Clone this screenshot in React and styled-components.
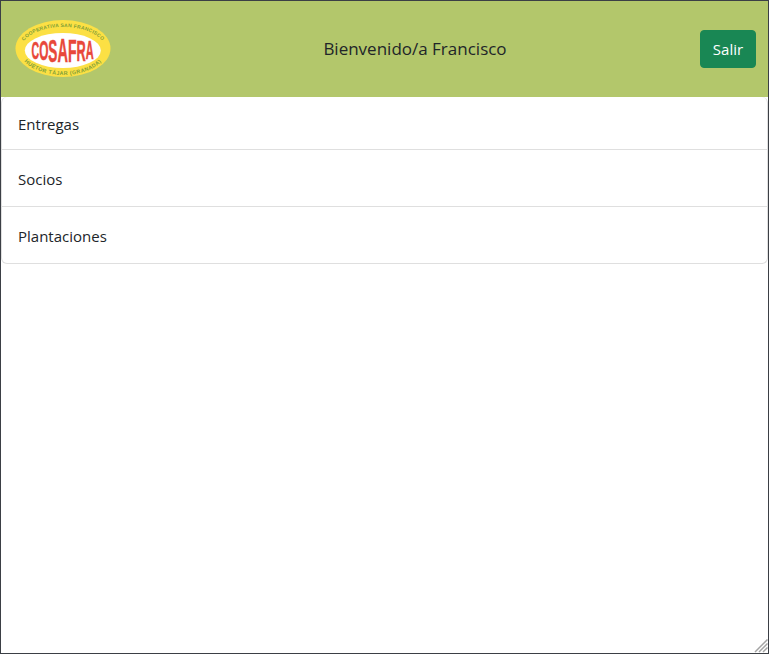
import React from "react";
import styled, { createGlobalStyle } from "styled-components";

const Global = createGlobalStyle`
  html, body { margin: 0; padding: 0; background: #fff; }
  body { font-family: "Open Sans", "Noto Sans", "Liberation Sans", sans-serif; }
`;

const Frame = styled.div`
  position: relative;
  box-sizing: border-box;
  width: 769px;
  height: 654px;
  border: 1px solid #3b3f45;
  background: #fff;
  overflow: hidden;
`;

const Header = styled.header`
  box-sizing: border-box;
  height: 96px;
  background: #b3c76b;
  display: flex;
  align-items: center;
  justify-content: space-between;
  padding: 0 12px 0 14px;
`;

const Title = styled.h1`
  margin: 0;
  font-size: 17px;
  font-weight: 400;
  line-height: 24px;
  padding: 0 1px 0 0;
  color: #212529;
`;

const LogoWrap = styled.div`
  display: flex;
  align-items: center;
  margin-right: 20px;
`;

const ExitButton = styled.button`
  box-sizing: border-box;
  width: 56px;
  height: 38px;
  border: 1px solid #198754;
  border-radius: 4px;
  background: #198754;
  color: #fff;
  font: inherit;
  font-size: 15px;
  padding: 0;
`;

const Menu = styled.nav`
  display: flex;
  flex-direction: column;
  border: 1px solid #dfdfdf;
  border-top: 0;
  border-radius: 6px;
`;

const MenuItem = styled.a`
  box-sizing: border-box;
  display: flex;
  align-items: center;
  height: ${(p) => p.$height}px;
  padding: 1px 16px 0;
  font-size: 15px;
  color: #212529;
  border-bottom: ${(p) => (p.$last ? "0" : "1px solid #dfdfdf")};
`;

const Grip = styled.svg`
  position: absolute;
  right: 0;
  bottom: 0;
  width: 14px;
  height: 14px;
`;

const SCALE_X = 0.44;
const LETTERS = [
  ["C", 24],
  ["O", 27],
  ["S", 31],
  ["A", 33],
  ["F", 32],
  ["R", 29],
  ["A", 25],
];
const baseline = (size) => 32.5 + size * 0.36;

const Logo = () => (
  <svg width="96" height="62" viewBox="0 0 96 62" aria-label="Cosafra">
    <defs>
      <path id="arcTop" d="M8.2 38 A42 22 0 1 1 87.8 38" />
      <path id="arcBot" d="M4 31 A44 26 0 0 0 92 31" />
    </defs>
    <ellipse cx="48" cy="30.5" rx="47.5" ry="28.5" fill="#fce044" />
    <ellipse cx="47.8" cy="32.5" rx="38" ry="17.5" fill="#fff" />
    <text fontFamily="'Liberation Sans', sans-serif" fontSize="5" fontWeight="700" letterSpacing="0.25" fill="#7f9f38">
      <textPath href="#arcTop" startOffset="50%" textAnchor="middle">COOPERATIVA SAN FRANCISCO</textPath>
    </text>
    <text fontFamily="'Liberation Sans', sans-serif" fontSize="5.4" fontWeight="700" letterSpacing="0.4" fill="#7f9f38">
      <textPath href="#arcBot" startOffset="50%" textAnchor="middle">HUÉTOR TÁJAR (GRANADA)</textPath>
    </text>
    <g transform={`scale(${SCALE_X} 1)`}>
      <text
        x={16.5 / SCALE_X}
        y={baseline(LETTERS[0][1])}
        fontFamily="'Liberation Sans', sans-serif"
        fontWeight="700"
        fill="#e8483a"
        stroke="#e8483a"
        strokeWidth="0.5"
      >
        {LETTERS.map(([ch, size], i) => (
          <tspan key={i} dy={i === 0 ? 0 : baseline(size) - baseline(LETTERS[i - 1][1])} fontSize={size}>{ch}</tspan>
        ))}
      </text>
    </g>
  </svg>
);

export default function App() {
  return (
    <>
      <Global />
      <Frame>
        <Header>
          <LogoWrap><Logo /></LogoWrap>
          <Title>Bienvenido/a Francisco</Title>
          <ExitButton>Salir</ExitButton>
        </Header>
        <Menu>
          <MenuItem $height={53}>Entregas</MenuItem>
          <MenuItem $height={57}>Socios</MenuItem>
          <MenuItem $height={56} $last>Plantaciones</MenuItem>
        </Menu>
        <Grip viewBox="0 0 14 14">
          <path d="M13.5 0.5 L1 13 M13.5 4.5 L5 13 M13.5 8.5 L9 13" stroke="#a4a4a4" strokeWidth="1.5" fill="none" />
        </Grip>
      </Frame>
    </>
  );
}
